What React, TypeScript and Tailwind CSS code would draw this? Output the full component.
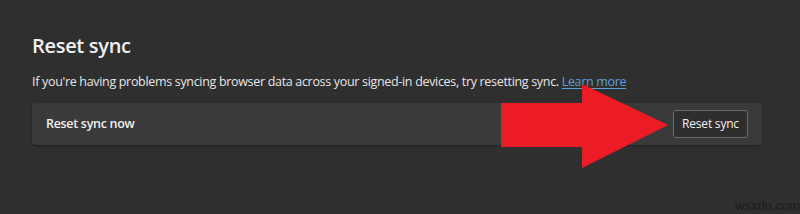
import React from "react";

export default function App() {
  return (
    <div className="relative w-[800px] h-[214px] overflow-hidden bg-[#2f2f2f] font-['Open_Sans',sans-serif] text-[#f0f0f0]">
      <div className="pl-[32px] pr-[38px] pt-[33px]">
        <h2 className="text-[20px] leading-[26px] font-semibold tracking-[-0.3px]">Reset sync</h2>
        <p className="mt-[14px] text-[12.5px] leading-[18px] text-[#e6e6e6] tracking-[-0.32px]">
          If you're having problems syncing browser data across your signed-in devices, try resetting sync.{" "}
          <a className="text-[#5aa0dc] underline underline-offset-2">Learn more</a>
        </p>
        <div className="mt-[12px] h-[42px] rounded-[4px] bg-[#3a3a3a] shadow-[0_1px_2px_rgba(0,0,0,0.35)] flex items-center justify-between pl-[14px] pr-[14px]">
          <span className="text-[12.5px] font-semibold tracking-[-0.3px]">Reset sync now</span>
          <button className="h-[28px] w-[75px] rounded-[3px] border border-[#6a6a6a] bg-[#2e2e2e] text-[12px] tracking-[-0.2px] text-[#f0f0f0]">
            Reset sync
          </button>
        </div>
      </div>
      <svg className="absolute left-0 top-0" width="800" height="214" viewBox="0 0 800 214">
        <polygon points="501,103 582,103 582,84 668,125 582,168 582,147 501,147" fill="#ec1c24" />
      </svg>
      <span className="absolute left-[735px] top-[196px] text-[13px] text-[#1c1c1c] font-['Liberation_Sans',sans-serif]">wsxdn.com</span>
    </div>
  );
}
